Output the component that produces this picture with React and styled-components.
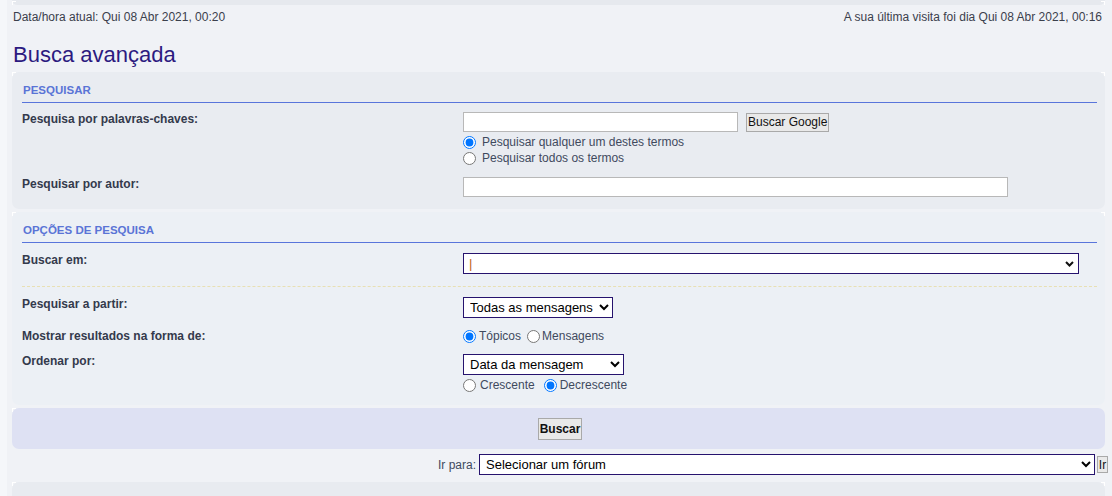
import React from "react";
import styled, { createGlobalStyle, css } from "styled-components";

const Global = createGlobalStyle`
  html, body { margin: 0; padding: 0; }
  body {
    background: #f5f7fa;
    font-family: "Liberation Sans", Arial, sans-serif;
    font-size: 12px;
    color: #343a4c;
  }
`;

const Wrap = styled.div`
  margin-left: 7px;
  width: 1105px;
  box-sizing: border-box;
  padding: 0 7px 0 5px;
  background: #f0f2f6;
  min-height: 496px;
`;

const corners = css`
  position: relative;
  &::before, &::after {
    content: "";
    position: absolute;
    top: 0;
    width: 3px;
    height: 3px;
    border-top: 1px solid #ffffff;
  }
  &::before { left: 0; border-left: 1px solid #ffffff; }
  &::after { right: 0; border-right: 1px solid #ffffff; }
`;

const TopStrip = styled.div`
  height: 5px;
  background: #e6e9ee;
  border-radius: 0 0 7px 7px;
  ${corners}
  &::before, &::after { top: 1px; }
`;

const InfoBar = styled.div`
  display: flex;
  justify-content: space-between;
  padding: 5px 3px 0 1px;
  line-height: 14px;
  color: #3b404c;
`;

const Title = styled.h2`
  margin: 18px 0 4px 1px;
  font-size: 22px;
  line-height: 26px;
  font-weight: normal;
  color: #2c1a80;
`;

const Panel = styled.div`
  ${corners}
  background: ${(p) => p.$bg};
  border-radius: 7px;
  padding: 11px 8px ${(p) => p.$pb || 12}px 10px;
  margin-bottom: 3px;
`;

const PanelHead = styled.h3`
  margin: 0 0 ${(p) => p.$mb || 9}px 0;
  padding: 0 0 5px 1px;
  font-size: 11.5px;
  line-height: 14px;
  font-weight: bold;
  text-transform: uppercase;
  color: #5a74d6;
  border-bottom: 1px solid #5975db;
`;

const Row = styled.div`
  display: grid;
  grid-template-columns: 441px 1fr;
  margin-top: ${(p) => p.$mt || 0}px;
  padding-bottom: ${(p) => p.$pb || 0}px;
  border-bottom: ${(p) => (p.$dashed ? "1px dashed #e8e0b4" : "none")};
`;

const Label = styled.div`
  font-weight: bold;
  line-height: 14px;
  color: #343a4c;
`;

const Field = styled.div`
  display: flex;
  flex-direction: column;
  align-items: flex-start;
`;

const InlineLine = styled.div`
  display: flex;
  align-items: center;
  gap: 8px;
`;

const TextInput = styled.input`
  box-sizing: border-box;
  width: ${(p) => p.$w}px;
  height: 20px;
  border: 1px solid #b8b8b8;
  background: #fff;
  margin: 0;
  padding: 0 3px;
  font: 12px "Liberation Sans", Arial, sans-serif;
`;

const Button = styled.button`
  box-sizing: border-box;
  height: ${(p) => p.$h || 19}px;
  margin: 0;
  padding: 0 1px;
  background: #e9e9e9;
  border: 1px solid #a9a9a9;
  border-radius: 0;
  font: ${(p) => (p.$bold ? "bold" : "normal")} 12px "Liberation Sans", Arial, sans-serif;
  color: #111;
`;

const SelectBox = styled.div`
  position: relative;
  display: inline-block;
  width: ${(p) => p.$w}px;
  height: 21px;
`;

const Select = styled.select`
  box-sizing: border-box;
  width: ${(p) => p.$w}px;
  height: 21px;
  margin: 0;
  padding: 0 2px;
  background: #fff;
  border: 1px solid #26136e;
  border-radius: 0;
  font: 13px "Liberation Sans", Arial, sans-serif;
  color: ${(p) => p.$color || "#000"};
  ${(p) =>
    p.$plain &&
    css`
      appearance: none;
      -webkit-appearance: none;
      padding: 0 5px;
      width: 100%;
    `}
`;

const Chevron = styled.svg`
  position: absolute;
  right: 5px;
  top: 8px;
  width: 9px;
  height: 6px;
  pointer-events: none;
`;

const RadioLine = styled.div`
  display: flex;
  align-items: center;
  height: 16px;
  margin-top: ${(p) => p.$mt || 0}px;
  color: #3f4a5e;
  line-height: 14px;
`;

const RadioLabel = styled.label`
  display: inline-flex;
  align-items: center;
  margin-right: ${(p) => p.$mr || 0}px;
`;

const Radio = styled.input.attrs({ type: "radio" })`
  width: 13px;
  height: 13px;
  margin: 0 ${(p) => p.$gap || 3}px 0 0;
`;

const SubmitBar = styled(Panel)`
  display: flex;
  justify-content: center;
  padding: 10px 0 9px 3px;
  margin-bottom: 0;
  &::after { display: none; }
`;

const JumpBox = styled.div`
  display: flex;
  justify-content: flex-end;
  align-items: center;
  margin: 5px -3px 0 0;
  gap: 2px;
  color: #3f4a5e;
`;

const JumpLabel = styled.span`
  margin-right: 1px;
`;

const GoButton = styled(Button)`
  width: 11px;
  height: 17px;
  padding: 0;
  overflow: hidden;
`;

const BottomPanel = styled.div`
  ${corners}
  margin-top: 7px;
  height: 20px;
  background: #e8ebf0;
  border-radius: 7px 7px 0 0;
`;

export default function App() {
  return (
    <>
      <Global />
      <Wrap>
        <TopStrip />
        <InfoBar>
          <span>Data/hora atual: Qui 08 Abr 2021, 00:20</span>
          <span>A sua última visita foi dia Qui 08 Abr 2021, 00:16</span>
        </InfoBar>
        <Title>Busca avançada</Title>

        <Panel $bg="#e9ecf1">
          <PanelHead>Pesquisar</PanelHead>
          <Row>
            <Label>Pesquisa por palavras-chaves:</Label>
            <Field>
              <InlineLine>
                <TextInput $w={275} type="text" />
                <Button>Buscar Google</Button>
              </InlineLine>
              <RadioLine $mt={2}>
                <RadioLabel>
                  <Radio name="terms" $gap={6} defaultChecked />
                  Pesquisar qualquer um destes termos
                </RadioLabel>
              </RadioLine>
              <RadioLine>
                <RadioLabel>
                  <Radio name="terms" $gap={6} />
                  Pesquisar todos os termos
                </RadioLabel>
              </RadioLine>
            </Field>
          </Row>
          <Row $mt={11}>
            <Label>Pesquisar por autor:</Label>
            <Field>
              <TextInput $w={545} type="text" />
            </Field>
          </Row>
        </Panel>

        <Panel $bg="#ecf0f5">
          <PanelHead $mb={10}>Opções de pesquisa</PanelHead>
          <Row $pb={12} $dashed>
            <Label>Buscar em:</Label>
            <Field>
              <SelectBox $w={616}>
                <Select $plain $color="#c0631a">
                  <option>|</option>
                </Select>
                <Chevron viewBox="0 0 9 6">
                  <path d="M1 1 L4.5 4.5 L8 1" fill="none" stroke="#111" strokeWidth="2" />
                </Chevron>
              </SelectBox>
            </Field>
          </Row>
          <Row $mt={10}>
            <Label>Pesquisar a partir:</Label>
            <Field>
              <Select $w={150}>
                <option>Todas as mensagens</option>
              </Select>
            </Field>
          </Row>
          <Row $mt={11}>
            <Label>Mostrar resultados na forma de:</Label>
            <Field>
              <RadioLine $mt={-1}>
                <RadioLabel $mr={6}>
                  <Radio name="show" defaultChecked />
                  Tópicos
                </RadioLabel>
                <RadioLabel>
                  <Radio name="show" $gap={2} />
                  Mensagens
                </RadioLabel>
              </RadioLine>
            </Field>
          </Row>
          <Row $mt={10}>
            <Label>Ordenar por:</Label>
            <Field>
              <Select $w={161}>
                <option>Data da mensagem</option>
              </Select>
              <RadioLine $mt={2}>
                <RadioLabel $mr={9}>
                  <Radio name="dir" $gap={4} />
                  Crescente
                </RadioLabel>
                <RadioLabel>
                  <Radio name="dir" defaultChecked />
                  Decrescente
                </RadioLabel>
              </RadioLine>
            </Field>
          </Row>
        </Panel>

        <SubmitBar $bg="#dee1f3">
          <Button $bold $h={22}>Buscar</Button>
        </SubmitBar>

        <JumpBox>
          <JumpLabel>Ir para:</JumpLabel>
          <Select $w={616}>
            <option>Selecionar um fórum</option>
          </Select>
          <GoButton>Ir</GoButton>
        </JumpBox>

        <BottomPanel />
      </Wrap>
    </>
  );
}
